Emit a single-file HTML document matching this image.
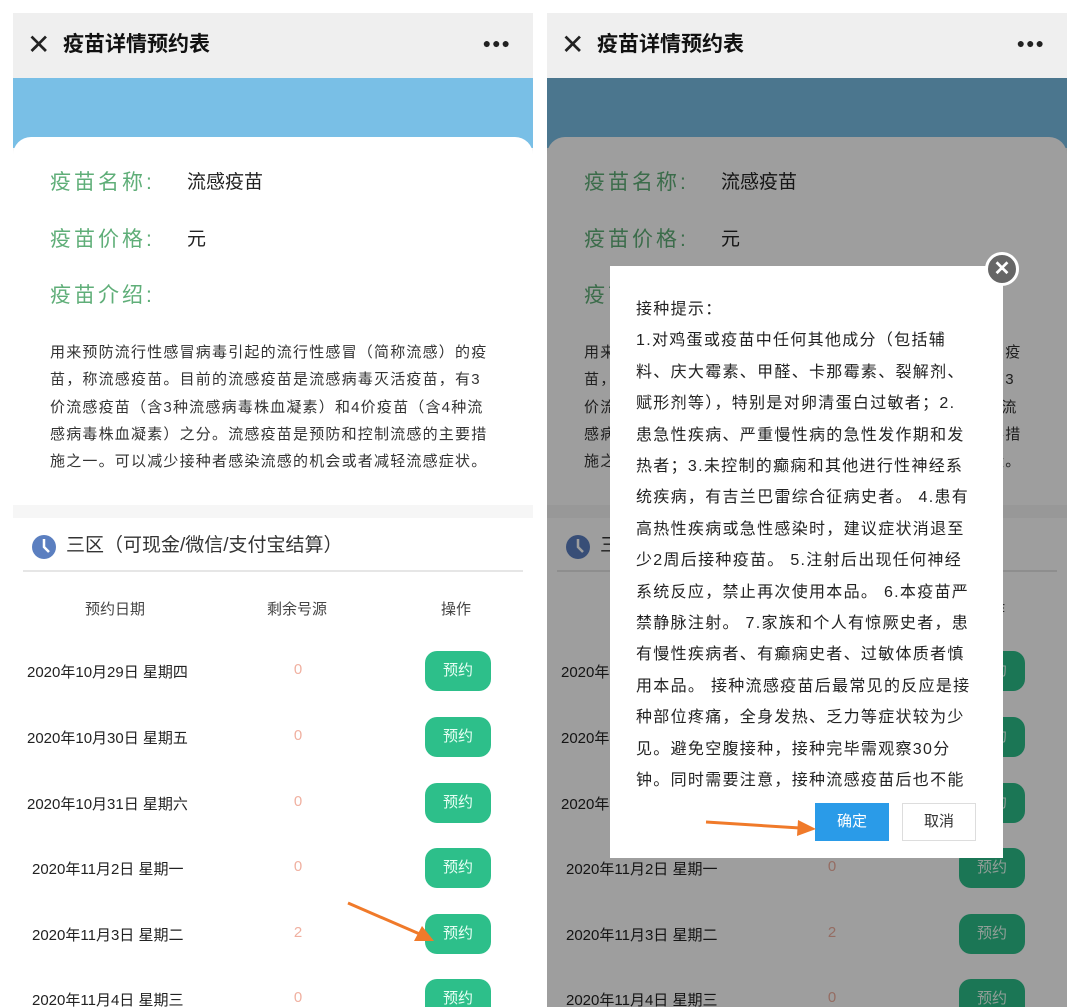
<!DOCTYPE html>
<html><head><meta charset="utf-8"><style>
*{margin:0;padding:0;box-sizing:border-box}
body{width:1080px;height:1007px;background:#fff;position:relative;overflow:hidden;font-family:"Liberation Sans","Noto Sans CJK SC",sans-serif;color:#333}
.p{position:absolute;top:13px;width:520px;height:994px;overflow:hidden;background:#f6f6f6}
.p div,.p span{position:absolute}
.hdr{left:0;top:0;width:520px;height:65px;background:#efefef}
.x{left:14px;top:18px;font-size:28px;color:#222;line-height:28px}
.tt{left:50px;top:18px;font-size:21px;color:#111;font-weight:bold;line-height:28px}
.dots{right:22px;top:22px;font-size:14px;font-weight:bold;letter-spacing:1px;color:#222}
.blue{left:0;top:65px;width:520px;height:70px;background:#79bfe6}
.card{left:0;top:124px;width:520px;height:368px;background:#fff;border-radius:18px 18px 0 0}
.lb{left:37px;font-size:21px;color:#5fae78;letter-spacing:3px;line-height:26px}
.vl{left:174px;font-size:19px;color:#222;line-height:26px}
.para{left:37px;top:328px;width:470px;font-size:15px;line-height:27.3px;color:#333;white-space:nowrap;letter-spacing:1.2px}
.sec{left:0;top:505px;width:520px;height:500px;background:#fff}
.sh{left:53px;top:14px;font-size:19px;color:#333;line-height:28px}
.ln{left:10px;top:52px;width:500px;height:2px;background:#e6e6e6}
.th{top:80px;font-size:15px;color:#444}
.d{left:14px;font-size:15px;color:#222;width:180px}
.n{left:280px;width:10px;text-align:center;font-size:15px;color:#f0b0a0}
.b{left:412px;width:66px;height:40px;border-radius:12px;background:#2dbf8a;color:#e8fff4;font-size:15px;text-align:center;line-height:40px}
.m{position:absolute;left:26px;top:28px;font-size:16px;line-height:31.4px;color:#222;white-space:nowrap;letter-spacing:1.3px}
</style></head><body>

<div class="p" style="left:13px">
<div class="hdr"><span class="x">✕</span><span class="tt">疫苗详情预约表</span><span class="dots">●●●</span></div>
<div class="blue"></div>
<div class="card">
<span class="lb" style="top:33px">疫苗名称:</span><span class="vl" style="top:33px">流感疫苗</span>
<span class="lb" style="top:90px">疫苗价格:</span><span class="vl" style="top:90px">元</span>
<span class="lb" style="top:146px">疫苗介绍:</span>
<div class="para" style="top:202px">用来预防流行性感冒病毒引起的流行性感冒（简称流感）的疫<br>苗，称流感疫苗。目前的流感疫苗是流感病毒灭活疫苗，有3<br>价流感疫苗（含3种流感病毒株血凝素）和4价疫苗（含4种流<br>感病毒株血凝素）之分。流感疫苗是预防和控制流感的主要措<br>施之一。可以减少接种者感染流感的机会或者减轻流感症状。</div>
</div>
<div class="sec">
<svg style="position:absolute;left:18px;top:16px" width="26" height="26" viewBox="0 0 26 26"><circle cx="13" cy="13" r="12" fill="#5b7fc0"/><path d="M13 5V13L18 18" stroke="#fff" stroke-width="2.5" fill="none"/></svg>
<span class="sh">三区（可现金/微信/支付宝结算）</span><div class="ln"></div>
<span class="th" style="left:72px">预约日期</span><span class="th" style="left:254px">剩余号源</span><span class="th" style="left:428px">操作</span>
<span class="d" style="top:143px">2020年10月29日 星期四</span><span class="n" style="top:143px">0</span><div class="b" style="top:133px">预约</div>
<span class="d" style="top:209px">2020年10月30日 星期五</span><span class="n" style="top:209px">0</span><div class="b" style="top:199px">预约</div>
<span class="d" style="top:275px">2020年10月31日 星期六</span><span class="n" style="top:275px">0</span><div class="b" style="top:265px">预约</div>
<span class="d" style="top:340px;left:19px">2020年11月2日 星期一</span><span class="n" style="top:340px">0</span><div class="b" style="top:330px">预约</div>
<span class="d" style="top:406px;left:19px">2020年11月3日 星期二</span><span class="n" style="top:406px">2</span><div class="b" style="top:396px">预约</div>
<span class="d" style="top:471px;left:19px">2020年11月4日 星期三</span><span class="n" style="top:471px">0</span><div class="b" style="top:461px">预约</div>
</div>
</div>

<div class="p" style="left:547px">
<div class="hdr"><span class="x">✕</span><span class="tt">疫苗详情预约表</span><span class="dots">●●●</span></div>
<div class="blue"></div>
<div class="card">
<span class="lb" style="top:33px">疫苗名称:</span><span class="vl" style="top:33px">流感疫苗</span>
<span class="lb" style="top:90px">疫苗价格:</span><span class="vl" style="top:90px">元</span>
<span class="lb" style="top:146px">疫苗介绍:</span>
<div class="para" style="top:202px">用来预防流行性感冒病毒引起的流行性感冒（简称流感）的疫<br>苗，称流感疫苗。目前的流感疫苗是流感病毒灭活疫苗，有3<br>价流感疫苗（含3种流感病毒株血凝素）和4价疫苗（含4种流<br>感病毒株血凝素）之分。流感疫苗是预防和控制流感的主要措<br>施之一。可以减少接种者感染流感的机会或者减轻流感症状。</div>
</div>
<div class="sec">
<svg style="position:absolute;left:18px;top:16px" width="26" height="26" viewBox="0 0 26 26"><circle cx="13" cy="13" r="12" fill="#5b7fc0"/><path d="M13 5V13L18 18" stroke="#fff" stroke-width="2.5" fill="none"/></svg>
<span class="sh">三区（可现金/微信/支付宝结算）</span><div class="ln"></div>
<span class="th" style="left:72px">预约日期</span><span class="th" style="left:254px">剩余号源</span><span class="th" style="left:428px">操作</span>
<span class="d" style="top:143px">2020年10月29日 星期四</span><span class="n" style="top:143px">0</span><div class="b" style="top:133px">预约</div>
<span class="d" style="top:209px">2020年10月30日 星期五</span><span class="n" style="top:209px">0</span><div class="b" style="top:199px">预约</div>
<span class="d" style="top:275px">2020年10月31日 星期六</span><span class="n" style="top:275px">0</span><div class="b" style="top:265px">预约</div>
<span class="d" style="top:340px;left:19px">2020年11月2日 星期一</span><span class="n" style="top:340px">0</span><div class="b" style="top:330px">预约</div>
<span class="d" style="top:406px;left:19px">2020年11月3日 星期二</span><span class="n" style="top:406px">2</span><div class="b" style="top:396px">预约</div>
<span class="d" style="top:471px;left:19px">2020年11月4日 星期三</span><span class="n" style="top:471px">0</span><div class="b" style="top:461px">预约</div>
</div>
<div style="left:0;top:65px;width:520px;height:940px;background:rgba(0,0,0,0.38)"></div>
</div>

<div style="position:absolute;left:610px;top:266px;width:393px;height:592px;background:#fff;overflow:hidden">
<div class="m">接种提示：<br>1.对鸡蛋或疫苗中任何其他成分（包括辅<br>料、庆大霉素、甲醛、卡那霉素、裂解剂、<br>赋形剂等），特别是对卵清蛋白过敏者；2.<br>患急性疾病、严重慢性病的急性发作期和发<br>热者；3.未控制的癫痫和其他进行性神经系<br>统疾病，有吉兰巴雷综合征病史者。 4.患有<br>高热性疾病或急性感染时，建议症状消退至<br>少2周后接种疫苗。 5.注射后出现任何神经<br>系统反应，禁止再次使用本品。 6.本疫苗严<br>禁静脉注射。 7.家族和个人有惊厥史者，患<br>有慢性疾病者、有癫痫史者、过敏体质者慎<br>用本品。 接种流感疫苗后最常见的反应是接<br>种部位疼痛，全身发热、乏力等症状较为少<br>见。避免空腹接种，接种完毕需观察30分<br>钟。同时需要注意，接种流感疫苗后也不能</div>
<div style="position:absolute;left:0;top:530px;width:393px;height:62px;background:#fff"></div>
<div style="position:absolute;left:205px;top:537px;width:74px;height:38px;background:#2a9be8;color:#fff;font-size:15px;text-align:center;line-height:38px">确定</div>
<div style="position:absolute;left:292px;top:537px;width:74px;height:38px;background:#fff;border:1px solid #ddd;color:#333;font-size:15px;text-align:center;line-height:36px">取消</div>
</div>
<div style="position:absolute;left:985px;top:252px;width:34px;height:34px;border-radius:50%;background:#666;border:3px solid #fff;color:#fff;font-size:20px;font-weight:bold;text-align:center;line-height:28px">✕</div>

<svg style="position:absolute;left:0;top:0" width="1080" height="1007">
<line x1="348" y1="903" x2="422" y2="935" stroke="#f07a2a" stroke-width="3"/>
<polygon points="434,941 414,941 422,926" fill="#f07a2a"/>
<line x1="706" y1="822" x2="800" y2="828" stroke="#f07a2a" stroke-width="3"/>
<polygon points="816,829 798,820 797,836" fill="#f07a2a"/>
</svg>
</body></html>
